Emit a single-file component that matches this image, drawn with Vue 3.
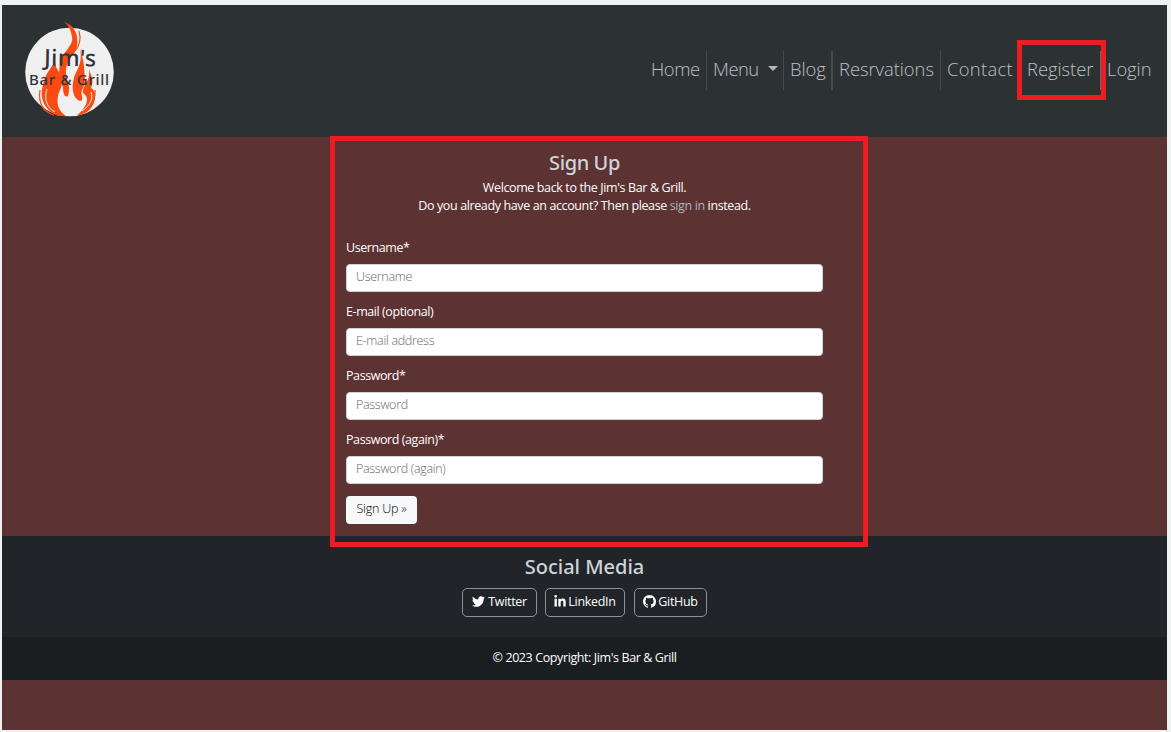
<script setup>
const links = [
  { label: 'Home', cls: 'home' },
  { label: 'Menu', cls: 'menu', caret: true },
  { label: 'Blog', cls: 'blog' },
  { label: 'Resrvations', cls: 'resv' },
  { label: 'Contact', cls: 'contact' },
  { label: 'Register', cls: 'register', marked: true },
  { label: 'Login', cls: 'login' },
]
const fields = [
  { id: 'username', label: 'Username*', hint: 'Username', type: 'text' },
  { id: 'email', label: 'E-mail (optional)', hint: 'E-mail address', type: 'email' },
  { id: 'password1', label: 'Password*', hint: 'Password', type: 'password' },
  { id: 'password2', label: 'Password (again)*', hint: 'Password (again)', type: 'password' },
]
</script>

<template>
  <div class="page">
    <header class="top">
      <svg class="logo" width="92" height="98" viewBox="0 0 92 98">
        <circle cx="45.500" cy="50" r="44.300" fill="#f0f0f0" />
        <g fill="#fb4a12">
          <path d="M40 0C50 3 55 12 53 24C51 34 41 37 42 52C43 60 47 63 44 74C41 76 39 72 39 65C36 59 34 51 36 43C38 29 50 24 48 15C47 8 45 4 40 0Z" />
          <path d="M31 39C26 48 21 52 19 63C15 76 20 88 34 94L42 94C36 90 32 84 34 74C35 68 39 65 38 56C37 50 31 48 31 39Z" />
          <path d="M56 27C61 41 60 50 61 58C61 62 59 66 58 68C56 73 61 78 56 79C49 77 47 66 50 56C52 48 59 43 56 27Z" />
          <path d="M65 47C68 56 70 59 67 66C74 69 72 86 61 91L53 94C60 87 68 77 59 71C58 63 67 60 65 47Z" />
        </g>
        <g fill="none" stroke="#fb4a12" stroke-width="1.200">
          <path d="M16 68C14 82 20 90 30 93M71 68C72 79 66 87 54 93M55 9C58 19 54 26 50 30" />
        </g>
        <g fill="none" stroke="#f0f0f0" stroke-width="1">
          <path d="M23 67C19 79 25 87 31 90M67 70C70 78 64 85 58 89" />
        </g>
        <text x="20" y="44" class="brand big" textLength="52" transform="rotate(1 45 45)">Jim's</text>
        <text x="5" y="63" class="brand small" textLength="80">Bar &amp; Grill</text>
      </svg>
      <nav class="nav">
        <a v-for="l in links" :key="l.label" class="link" :class="l.cls">
          <span>{{ l.label }}</span>
          <i v-if="l.caret" class="caret"></i>
          <b v-if="l.marked" class="frame nav-frame"></b>
        </a>
      </nav>
    </header>

    <main class="main">
      <section class="signup">
        <h1 class="title signup-title">Sign Up</h1>
        <p class="intro">Welcome back to the Jim's Bar &amp; Grill.</p>
        <p class="intro second">Do you already have an account? Then please <a>sign in</a> instead.</p>
        <form class="form" @submit.prevent>
          <div v-for="f in fields" :key="f.id" class="field">
            <label :for="f.id">{{ f.label }}</label>
            <input :id="f.id" :type="f.type" :placeholder="f.hint" />
          </div>
          <button class="submit">Sign Up »</button>
        </form>
        <b class="frame form-frame"></b>
      </section>
    </main>

    <footer class="footer">
      <h2 class="title social-title">Social Media</h2>
      <div class="social">
        <a class="btn tw">
          <svg width="13" height="13" viewBox="0 0 512 512"><path fill="#fff" d="M459 152c.3 4.500.3 9 .3 13.600C459.300 304 354 464 161 464c-59 0-114-17-161-47 8 1 16 1.300 25 1.300 49 0 94-17 130-45-46-1-85-31-98-73 6 1 13 1.600 20 1.600 9 0 19-1 27-4-48-10-84-52-84-103v-1c14 8 30 13 47 13-28-19-47-51-47-87 0-19 5-37 14-53 52 64 129 105 216 110-2-8-3-16-3-24C247 96 294 48 352 48c30 0 58 13 77 33 24-5 46-13 67-25-8 24-24 45-46 58 21-2 42-8 60-16-14 21-31 39-51 54z" /></svg>
          <span>Twitter</span>
        </a>
        <a class="btn li">
          <svg width="12" height="13" viewBox="0 0 448 512"><path fill="#fff" d="M100 448H7V149h93zM54 108C24 108 0 83 0 54a54 54 0 0 1 108 0c0 29-24 54-54 54zM448 448h-93V302c0-34-1-79-48-79-49 0-56 38-56 77v148h-93V149h89v41h1c13-24 43-48 88-48 94 0 112 62 112 142z" /></svg>
          <span>LinkedIn</span>
        </a>
        <a class="btn gh">
          <svg width="13" height="13" viewBox="0 0 16 16"><path fill="#fff" d="M8 0C3.580 0 0 3.580 0 8c0 3.540 2.290 6.530 5.470 7.590.4.070.55-.17.55-.38 0-.19-.01-.82-.01-1.490-2.010.37-2.530-.49-2.690-.94-.09-.23-.48-.94-.82-1.130-.28-.15-.68-.52-.01-.53.63-.01 1.080.58 1.230.82.72 1.210 1.870.87 2.330.66.07-.52.28-.87.51-1.070-1.780-.2-3.640-.89-3.640-3.950 0-.87.31-1.590.82-2.150-.08-.2-.36-1.020.08-2.120 0 0 .67-.21 2.200.82.64-.18 1.320-.27 2-.27s1.360.09 2 .27c1.530-1.040 2.200-.82 2.200-.82.44 1.100.16 1.920.08 2.120.51.56.82 1.270.82 2.150 0 3.070-1.870 3.750-3.650 3.950.29.25.54.73.54 1.480 0 1.070-.01 1.930-.01 2.200 0 .21.15.46.55.38A8.010 8.010 0 0 0 16 8c0-4.420-3.580-8-8-8z" /></svg>
          <span>GitHub</span>
        </a>
      </div>
    </footer>
    <div class="copy">© 2023 Copyright: Jim's Bar &amp; Grill</div>
  </div>
</template>

<style>
body {
  background: #f0f2f1;
}
</style>

<style scoped>
* {
  box-sizing: border-box;
}
.page {
  width: 1165px;
  height: 725px;
  margin: 5px 0 2px 2px;
  overflow: hidden;
  background: #5c3232;
  color: #fff;
  font-family: "Open Sans", "Noto Sans", sans-serif;
  font-size: 12.5px;
}
.top {
  height: 132px;
  padding: 17px 8px 0 22px;
  display: flex;
  justify-content: space-between;
  align-items: flex-start;
  background: #2c3134;
}
.brand {
  font-family: "Noto Sans", sans-serif;
  font-weight: 500;
  fill: #30343a;
}
.big {
  font-size: 23px;
}
.small {
  font-size: 15px;
}
.nav {
  display: flex;
  margin-top: 29px;
}
.link {
  position: relative;
  display: flex;
  align-items: center;
  height: 39px;
  padding: 0 0 4px 6px;
  border-right: 1px solid #45494d;
  color: #bdc0c2;
  font-size: 18.4px;
  font-weight: 300;
  line-height: 35px;
  letter-spacing: -0.05px;
  white-space: nowrap;
}
.home { width: 62px; letter-spacing: -0.4px; }
.menu { width: 77px; letter-spacing: -0.5px; }
.blog { width: 49px; border-right: 2px solid #484c50; }
.resv { width: 108px; }
.contact { width: 80px; letter-spacing: 0.3px; }
.register { width: 80px; border-color: #686b6e; }
.login { width: 58px; border-right: 0; }
.caret {
  margin-left: 9px;
  border: 5px solid transparent;
  border-top-color: #b3b6b8;
  border-bottom: 0;
}
.frame {
  position: absolute;
  border: 5px solid #ed1c24;
  pointer-events: none;
}
.nav-frame {
  left: -4px;
  top: -11px;
  width: 89px;
  height: 60px;
}
.main {
  height: 399px;
  display: flex;
  justify-content: center;
}
.signup {
  position: relative;
  width: 477px;
  padding-top: 14px;
  z-index: 1;
}
.form-frame {
  left: -16px;
  top: -1px;
  width: 538px;
  height: 411px;
}
.title {
  margin: 0;
  font-family: "Noto Sans", sans-serif;
  font-size: 20px;
  font-weight: 500;
  line-height: 24px;
  text-align: center;
  color: #ced4da;
}
.signup-title {
  letter-spacing: -0.4px;
}
.intro {
  margin: 4px 0 0;
  line-height: 18px;
  text-align: center;
  letter-spacing: -0.38px;
}
.second {
  margin: 0;
}
.intro a {
  color: #adb5bd;
}
.form {
  margin-top: 24px;
}
.field {
  margin-bottom: 11px;
}
.field label {
  display: block;
  height: 18px;
  margin-bottom: 7px;
  line-height: 18px;
  letter-spacing: -0.42px;
}
.field input {
  display: block;
  width: 477px;
  height: 28px;
  margin: 0;
  padding: 0 9px 3px;
  border: 1px solid #ced4da;
  border-radius: 4px;
  background: #fff;
  font: 300 12.5px "Open Sans", sans-serif;
  letter-spacing: -0.3px;
  outline: 0;
}
.field input::placeholder {
  color: #5f6870;
  opacity: 1;
}
.submit {
  display: block;
  width: 71px;
  height: 28px;
  margin-top: 12px;
  padding: 0 0 3px;
  border: 0;
  border-radius: 4px;
  background: #f8f9fa;
  color: #000;
  font: 300 12.5px "Open Sans", sans-serif;
  letter-spacing: -0.2px;
}
.footer {
  height: 101px;
  padding-top: 19px;
  background: #212529;
}
.social {
  display: flex;
  justify-content: center;
  gap: 8px;
  margin-top: 9px;
}
.btn {
  display: flex;
  justify-content: center;
  align-items: center;
  gap: 3px;
  height: 29px;
  padding-bottom: 2px;
  border: 1px solid #8f9294;
  border-radius: 5px;
  letter-spacing: -0.3px;
}
.tw { width: 75px; }
.li { width: 80px; gap: 2px; }
.gh { width: 73px; margin-left: 1px; gap: 2px; }
.copy {
  height: 43px;
  padding-top: 12px;
  background: #1a1e21;
  line-height: 18px;
  text-align: center;
  letter-spacing: -0.4px;
}
</style>
